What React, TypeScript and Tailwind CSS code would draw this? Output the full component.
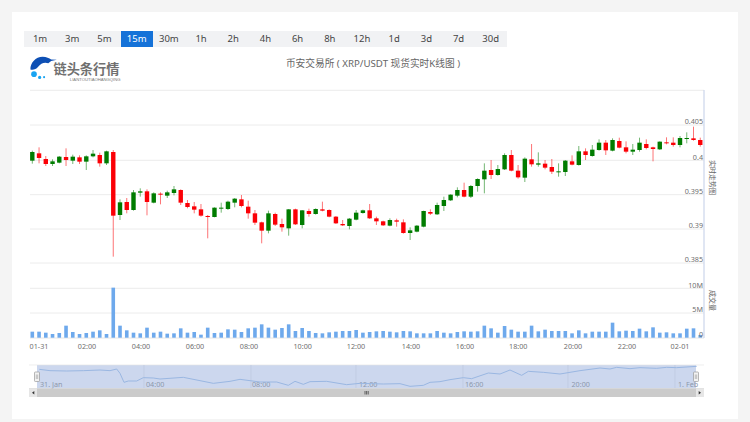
const TABS = ["1m","3m","5m","15m","30m","1h","2h","4h","6h","8h","12h","1d","3d","7d","30d"];

type C = [string, number, number, number, number];
// candles: colour, body top, body bottom, high, low (zoomed crop units)
const A: C[] = [["g",66,92,62,101],["r",70,84,52,100],["r",87,102,78,108],["g",94,102,88,108],["g",80,98,78,100],["r",81,90,55,108],["g",80,92,74,102],["r",82,95,76,102],["g",79,95,76,120],["g",71,79,60,82],["r",75,100,68,110],["g",64,100,62,105],["r",66,257,60,380],["g",217,255,208,270],["r",216,240,204,250],["g",187,240,180,242],["g",184,188,175,200],["r",184,216,178,256],["g",190,218,187,220],["r",191,194,187,223],["g",187,197,182,204],["g",178,189,168,196],["r",180,218,178,225],["r",219,231,210,235],["r",229,239,216,250],["r",238,257,222,260],["r",258,260,255,325],["g",233,261,232,262],["g",233,236,218,248],["g",215,237,212,240],["g",206,218,204,232],["r",208,228,195,232],["r",230,250,212,266],
["r",250,278,240,285],["r",277,302,275,340],["g",250,302,242,310],["r",252,284,248,288],["r",282,292,266,305],["g",238,295,237,317],["r",238,283,236,285],["g",241,285,240,295],["r",243,252,236,260],["g",237,252,235,254],["r",238,242,215,244],["r",240,260,238,262],["r",260,280,258,282],["r",282,286,270,288],["g",266,288,264,298],["g",248,269,240,271],["g",241,249,239,251],["r",241,265,222,267],["r",265,274,260,285],["r",274,286,272,288],["g",270,287,265,289],["r",271,275,266,290],["r",277,309,268,311],["g",301,309,292,330],["g",287,305,285,307],["g",243,290,242,292],["r",246,251,238,255],["g",225,253,218,255],["g",210,228,200,243],["g",194,211,193,213],["g",180,197,172,202],["r",180,200,158,202],["g",168,200,165,204],["g",147,168,145,185],["g",122,148,100,190],["r",120,135,90,147],["g",117,135,105,137]];
const B: C[] = [["g",165,208,160,210],["r",165,212,150,214],["r",212,232,195,236],["g",176,233,172,246],["r",178,193,132,200],["g",190,194,157,200],["r",191,203,180,208],["r",201,215,177,222],["g",214,216,190,230],["g",182,216,180,228],["r",184,194,166,196],["g",154,195,138,197],["r",154,165,145,180],["g",149,168,135,170],["g",128,150,118,152],["r",128,151,120,165],["g",120,152,115,154],["r",123,143,113,145],["r",142,155,124,160],["g",149,155,132,165],["g",128,150,113,155],["r",132,144,118,148],["r",142,147,140,184],["g",125,148,124,150],["r",127,130,112,133],["r",128,135,112,140],["g",114,135,108,142],["g",114,116,97,130],["r",115,120,80,122],["r",120,135,113,140]];

const candles = [
  ...A.map(([c, t, b, h, l]) => ({ c, t: 130 + t / 3, b: 130 + b / 3, h: 130 + h / 3, l: 130 + l / 3 })),
  ...B.map(([c, t, b, h, l]) => ({ c, t: 100 + t / 3, b: 100 + b / 3, h: 100 + h / 3, l: 100 + l / 3 })),
];

const VOL = [185,185,188,192,189,167,186,192,189,185,181,192,53,167,181,188,190,173,188,185,191,190,175,188,186,194,173,189,188,178,179,186,175,173,163,173,179,174,163,183,174,183,189,190,187,185,183,183,180,188,186,184,183,185,187,183,184,190,190,190,183,188,190,186,184,185,184,167,175,188,168,179,185,185,167,184,179,183,183,183,190,181,190,185,185,185,158,184,182,183,176,184,172,188,187,190,190,176,175,195];

const X = (i: number) => 32.3 + i * 6.747;

const nav1 = [[118,298],[150,302],[200,303],[250,302],[300,300],[330,302],[350,297],[360,310],[372,337],[385,333],[410,333],[430,323],[460,324],[480,327],[550,322],[600,332],[640,340],[690,334],[720,328],[750,332]];
const nav2 = [[30,336],[80,336],[115,346],[135,334],[160,343],[180,335],[230,334],[290,344],[330,340],[400,342],[450,341],[480,349],[520,346],[540,337],[570,335],[600,329],[640,323],[665,326],[715,309],[750,312]];
const nav3 = [[30,300],[65,316],[85,304],[130,307],[180,312],[240,302],[300,294],[330,297],[350,292],[390,296],[420,293],[470,295],[500,292],[530,293],[590,289]];
const navPts = [
  ...nav1.map(([x, y]) => [x / 3, 270 + y / 3]),
  ...nav2.map(([x, y]) => [250 + x / 3, 270 + y / 3]),
  ...nav3.map(([x, y]) => [500 + x / 3, 270 + y / 3]),
].map((p) => p.join(",")).join(" ");

const GRID = [90.3, 125, 160.3, 194.7, 229, 263, 288.3, 313];
const YL: [string, number][] = [["0.405", 125], ["0.4", 160.3], ["0.395", 194.7], ["0.39", 229], ["0.385", 263], ["10M", 288.3], ["5M", 313]];
const XL: [string, number][] = [["01-31", 39], ["02:00", 87], ["04:00", 141], ["06:00", 195], ["08:00", 249], ["10:00", 302.7], ["12:00", 356], ["14:00", 411], ["16:00", 465], ["18:00", 518.3], ["20:00", 573], ["22:00", 627], ["02-01", 680]];
const NL: [string, number][] = [["31. Jan", 40], ["04:00", 146], ["08:00", 252], ["12:00", 359], ["16:00", 465], ["20:00", 571.5], ["1. Feb", 678]];
const FF = "'Noto Sans','Noto Sans CJK SC',sans-serif";

function Chart() {
  return (
    <svg viewBox="12 85 726 334" className="block w-[726px] h-[334px]" style={{ fontFamily: FF }}>
      {GRID.map((y) => (
        <line key={y} x1="30" x2="704" y1={y} y2={y} stroke="#ececec" strokeWidth="1" />
      ))}
      <line x1="30" x2="704" y1="338" y2="338" stroke="#e6e6e6" strokeWidth="1" />
      <line x1="704" x2="704" y1="90" y2="338" stroke="#ccd6eb" strokeWidth="1.2" />

      {candles.map((c, i) => {
        const col = c.c === "g" ? "#007c00" : "#fb0006";
        const x = X(i);
        return (
          <g key={i}>
            <line x1={x} x2={x} y1={c.h} y2={c.l} stroke={col} strokeOpacity="0.55" strokeWidth="1" />
            <rect x={x - 2.2} y={c.t} width="4.4" height={Math.max(c.b - c.t, 1)} fill={col} />
          </g>
        );
      })}

      {VOL.map((t, i) => {
        const y = 270 + t / 3;
        return <rect key={i} x={X(i) - 1.8} y={y} width="3.6" height={337.7 - y} fill="#6ea9ec" />;
      })}

      {YL.map(([s, y]) => (
        <text key={s} x="703" y={y - 0.8} textAnchor="end" fontSize="7.2" fill="#6f6f6f">{s}</text>
      ))}
      <text x="703" y="337" textAnchor="end" fontSize="7.2" fill="#6f6f6f">0</text>
      <text transform="translate(710,160) rotate(90)" fontSize="7" fill="#666">实时走势图</text>
      <text transform="translate(710,290) rotate(90)" fontSize="7" fill="#666">成交量</text>

      {XL.map(([s, x]) => (
        <text key={s} x={x} y="349" textAnchor="middle" fontSize="7.2" fill="#6f6f6f">{s}</text>
      ))}

      <rect x="37" y="365" width="659" height="23.3" fill="#ccd7ee" />
      <line x1="29" x2="704" y1="365" y2="365" stroke="#e2e2e2" strokeWidth="0.6" />
      {[144, 251, 356, 463, 568, 675].map((x) => (
        <line key={x} x1={x} x2={x} y1="365" y2="388" stroke="#bcc7de" strokeWidth="0.7" />
      ))}
      {NL.map(([s, x]) => (
        <text key={s} x={x} y="387" fontSize="7.2" fill="#8d97ab">{s}</text>
      ))}
      <polyline points={navPts} fill="none" stroke="#9ab7e2" strokeWidth="1" />

      <rect x="29" y="388.3" width="675" height="8.7" fill="#cbcbcb" />
      <rect x="29" y="388.3" width="8" height="8.7" fill="#e6e6e6" />
      <rect x="696" y="388.3" width="8" height="8.7" fill="#e6e6e6" />
      <path d="M34.3 391 L34.3 394.6 L32 392.8 Z" fill="#333" />
      <path d="M698.7 391 L698.7 394.6 L701 392.8 Z" fill="#333" />
      {[365, 366.6, 368.2].map((x) => (
        <line key={x} x1={x} x2={x} y1="391" y2="394.5" stroke="#444" strokeWidth="0.8" />
      ))}
      {[37, 696].map((x) => (
        <g key={x}>
          <rect x={x - 2.5} y="372" width="5" height="9.5" rx="0.8" fill="#f2f2f2" stroke="#999" strokeWidth="0.7" />
          <line x1={x - 0.7} x2={x - 0.7} y1="374.5" y2="379" stroke="#888" strokeWidth="0.5" />
          <line x1={x + 0.7} x2={x + 0.7} y1="374.5" y2="379" stroke="#888" strokeWidth="0.5" />
        </g>
      ))}
    </svg>
  );
}

function Logo() {
  return (
    <div className="flex w-[92px] h-[28px] shrink-0">
      <svg viewBox="28 55 26 26" className="block w-[24.5px] h-[26px] shrink-0 overflow-visible">
        <path d="M29.5 69.5 C29.3 62.5 35 56 42.5 56 C46.5 56 49.5 57.7 51.5 59 L57.5 59.3 L51.5 60.5 L48.5 63 C44.5 61.5 40.5 63 37.5 67 C35.5 69.5 32 70.5 29.5 69.5 Z" fill="#0d4fb4" />
        <circle cx="33.3" cy="74.5" r="3" fill="#18a4f2" />
        <circle cx="39.3" cy="78" r="1.7" fill="#18a4f2" />
        <circle cx="44" cy="77.7" r="1.1" fill="#18a4f2" />
      </svg>
      <div className="flex flex-col w-[67px]">
        <span className="mt-[7px] h-[14px] text-[13.2px] leading-[14px] font-bold whitespace-nowrap text-[#707070] font-['Noto_Sans_CJK_SC',sans-serif]">链头条行情</span>
        <span className="mt-[1.5px] self-end text-[4.2px] leading-[4px] whitespace-nowrap text-[#777] font-['Liberation_Sans',sans-serif]">LIANTOUTIAOHANGQING</span>
      </div>
    </div>
  );
}

export default function App() {
  return (
    <div className="w-[750px] h-[422px] overflow-hidden bg-[#f4f4f4] pt-3 px-3 font-['Noto_Sans','Noto_Sans_CJK_SC',sans-serif]">
      <div className="flex flex-col w-[726px] h-[407px] bg-white">
        <div className="flex ml-3 mt-[19px] w-[483px] h-[16px] bg-[#f1f2f4]">
          {TABS.map((t) => (
            <div
              key={t}
              className={
                t === "15m"
                  ? "w-[32.2px] flex items-center justify-center text-[9.5px] leading-none bg-[#1572d8] text-white"
                  : "w-[32.2px] flex items-center justify-center text-[9.5px] leading-none text-[#444]"
              }
            >
              {t}
            </div>
          ))}
        </div>
        <div className="flex h-[38px] pl-[17px] pt-[8px]">
          <Logo />
          <div className="w-[504px] pt-[2px] text-center text-[9.7px] leading-[14px] whitespace-nowrap text-[#666]">
            币安交易所 ( XRP/USDT 现货实时K线图 )
          </div>
        </div>
        <Chart />
      </div>
    </div>
  );
}
